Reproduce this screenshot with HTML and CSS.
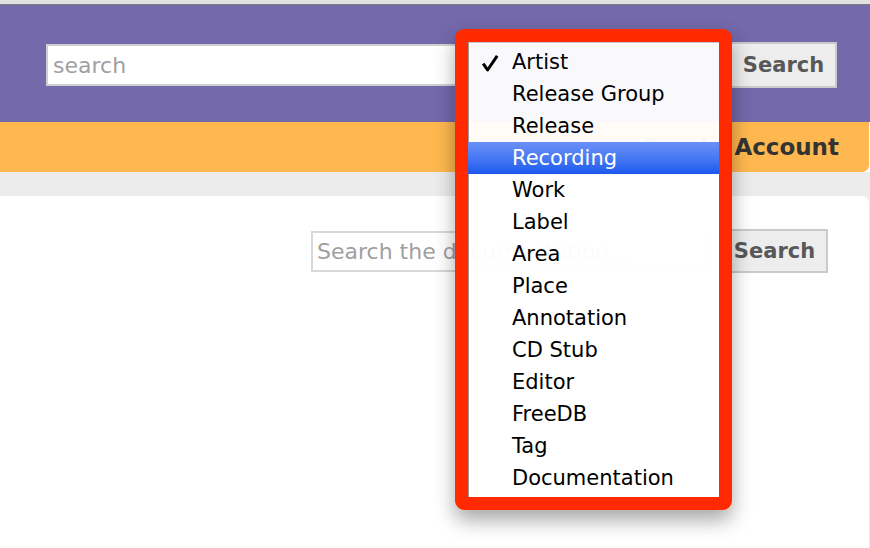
FILE: index.html
```html
<!DOCTYPE html>
<html>
<head>
    <title>MusicBrainz Search</title>
    <link rel="stylesheet" href="styles.css">
</head>
<body>
    <div class="chrome-line"></div>

    <div class="header">
        <input class="header-search" type="text" placeholder="search">
        <select class="header-type">
            <option>Artist</option>
        </select>
        <button class="search-button">Search</button>
    </div>

    <div class="nav-bar">
        <span class="nav-link">Create Account</span>
    </div>

    <div class="page">
        <div class="content">
            <div class="doc-search">
                <input class="doc-search-input" type="text" placeholder="Search the documentation...">
                <button class="search-button">Search</button>
            </div>
        </div>
    </div>

    <div class="menu-highlight">
        <ul class="type-menu">
            <li class="menu-item checked">
                <svg class="check" width="18" height="18" viewBox="0 0 18 18">
                    <path d="M2.2 9.6 L6.6 16 L16.2 1.8" fill="none" stroke="#000" stroke-width="3" stroke-linejoin="round"/>
                </svg>
                Artist
            </li>
            <li class="menu-item">Release Group</li>
            <li class="menu-item">Release</li>
            <li class="menu-item selected">Recording</li>
            <li class="menu-item">Work</li>
            <li class="menu-item">Label</li>
            <li class="menu-item">Area</li>
            <li class="menu-item">Place</li>
            <li class="menu-item">Annotation</li>
            <li class="menu-item">CD Stub</li>
            <li class="menu-item">Editor</li>
            <li class="menu-item">FreeDB</li>
            <li class="menu-item">Tag</li>
            <li class="menu-item">Documentation</li>
        </ul>
    </div>
</body>
</html>
```

FILE: styles.css
```css
body {
    margin: 0;
    padding: 0;
    background-color: #ffffff;
    font-family: "DejaVu Sans", "Liberation Sans", sans-serif;
    overflow: hidden;
    height: 548px;
}

.chrome-line {
    height: 4px;
    background-color: #e2e2e2;
    border-bottom: 1px solid #7b7b7b;
}

.header {
    height: 117px;
    box-sizing: border-box;
    padding: 37px 33px 0 46px;
    background-color: #7369ab;
    display: flex;
    align-items: flex-start;
}

.header-search {
    width: 421px;
    height: 42px;
    margin-top: 2px;
    box-sizing: border-box;
    border: 2px solid #d0d0d0;
    padding: 0 5px;
    font-family: "DejaVu Sans", sans-serif;
    font-size: 22px;
    color: #333;
    outline: none;
}

.header-search::placeholder,
.doc-search-input::placeholder {
    color: #a0a0a0;
}

.header-type {
    width: 250px;
    height: 38px;
    margin: 4px 0 0 3px;
    border: none;
    background-color: #7369ab;
    color: transparent;
}

.search-button {
    margin-left: auto;
    width: 107px;
    height: 46px;
    box-sizing: border-box;
    background-color: #ededed;
    border: 2px solid #cacaca;
    color: #585858;
    font-family: "DejaVu Sans", sans-serif;
    font-weight: bold;
    font-size: 21px;
    padding: 0;
}

.nav-bar {
    height: 50px;
    background-color: #feb84f;
    border-bottom-right-radius: 7px;
    margin-right: 1px;
    display: flex;
    align-items: center;
    justify-content: flex-end;
    padding-right: 30px;
}

.nav-link {
    font-weight: bold;
    font-size: 23px;
    color: #333;
}

.page {
    background-color: #ececec;
    padding-top: 24px;
}

.content {
    background-color: #fff;
    border-top-right-radius: 7px;
    margin-right: 1px;
    height: 360px;
}

.doc-search {
    display: flex;
    align-items: center;
    justify-content: flex-end;
    padding: 33px 41px 0 0;
}

.doc-search-input {
    width: 400px;
    height: 41px;
    box-sizing: border-box;
    border: 2px solid #d8d8d8;
    padding: 0 4px;
    font-family: "DejaVu Sans", sans-serif;
    font-size: 22px;
    outline: none;
}

.doc-search .search-button {
    margin-left: 10px;
    height: 44px;
}

/* annotation box around the open type menu */
.menu-highlight {
    position: absolute;
    left: 455px;
    top: 29px;
    width: 277px;
    height: 481px;
    box-sizing: border-box;
    border: 13px solid #ff2a00;
    border-radius: 9px;
    box-shadow: 0 10px 20px rgba(0, 0, 0, 0.35);
    overflow: hidden;
}

.type-menu {
    list-style: none;
    margin: 0;
    padding: 4px 0 3px 0;
    height: 100%;
    box-sizing: border-box;
    background-color: rgba(255, 255, 255, 0.96);
    box-shadow: inset 1px 0 0 #9a9a9a, inset 0 1px 0 #c8c8d4;
}

.menu-item {
    position: relative;
    height: 32px;
    line-height: 32px;
    padding-left: 44px;
    font-size: 21px;
    color: #000;
    white-space: nowrap;
}

.menu-item.selected {
    background: linear-gradient(to bottom, #6a90f6 0%, #4476f2 55%, #1c58ec 100%);
    color: #fff;
}

.check {
    position: absolute;
    left: 13px;
    top: 8px;
}
```
